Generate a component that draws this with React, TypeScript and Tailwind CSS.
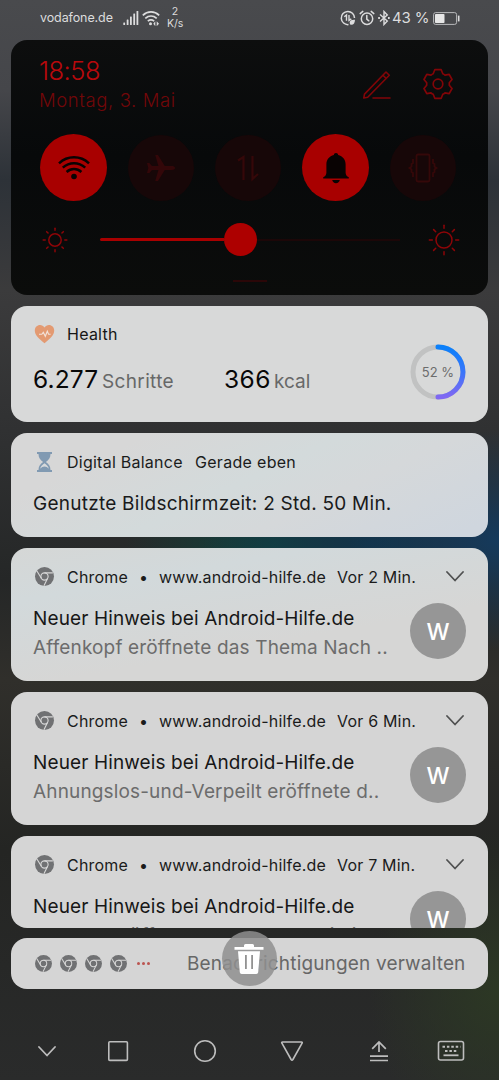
import type { ReactNode } from 'react'

type Notification = {
  time: string
  text: string
  clipped?: boolean
}

const notifications: Notification[] = [
  { time: 'Vor 2 Min.', text: 'Affenkopf eröffnete das Thema Nach ..' },
  { time: 'Vor 6 Min.', text: 'Ahnungslos-und-Verpeilt eröffnete d..' },
  { time: 'Vor 7 Min.', text: 'knuddel eröffnete das Thema bei dir ..', clipped: true },
]

function ChromeIcon({ className }: { className: string }) {
  return (
    <svg className={className} viewBox="0 0 20 20" fill="none">
      <circle cx="10" cy="10" r="10" fill="#707173" />
      <circle cx="10" cy="10" r="3.8" stroke="#d6d6d6" strokeWidth="1.2" />
      <path d="M10 6.2H18.8M6.7 11.9L2 4.2M13.3 11.9L9.4 19.8" stroke="#d6d6d6" strokeWidth="1.2" />
    </svg>
  )
}

function Sun({ className, r, inner, outer }: { className: string; r: number; inner: number; outer: number }) {
  return (
    <svg className={className} viewBox="-16 -16 32 32" fill="none" stroke="#8d0508" strokeWidth="1.5" strokeLinecap="round">
      <circle r={r} />
      {[0, 45, 90, 135, 180, 225, 270, 315].map((a) => (
        <path key={a} d={`M0 ${-inner}V${-outer}`} transform={`rotate(${a})`} />
      ))}
    </svg>
  )
}

function Tile({ on, children }: { on?: boolean; children: ReactNode }) {
  return (
    <div className={on ? 'size-[67px] rounded-full bg-[#a80000] flex items-center justify-center' : 'size-[66px] rounded-full bg-[#170708] flex items-center justify-center'}>
      {children}
    </div>
  )
}

function StatusBar() {
  return (
    <div className="h-[40px] shrink-0 flex items-center pl-[40px] pr-[38px] pb-[4px] text-[#dcdcdd]">
      <span className="text-[12.5px] tracking-[-0.1px] w-[83px] whitespace-nowrap">vodafone.de</span>
      <svg className="w-[16px] h-[16px]" viewBox="0 0 16 16" fill="currentColor">
        <rect x="0.3" y="12.5" width="1.8" height="2.5" rx=".5" />
        <rect x="3.7" y="9.5" width="1.8" height="5.5" rx=".5" />
        <rect x="7" y="6.5" width="1.8" height="8.5" rx=".5" />
        <rect x="10.3" y="3.5" width="1.8" height="11.5" rx=".5" />
        <rect x="13.5" y="1" width="1.8" height="14" rx=".5" />
      </svg>
      <svg className="w-[18px] h-[16px] ml-[3px]" viewBox="0 0 18 16" fill="none" stroke="currentColor" strokeWidth="1.7">
        <path d="M.8 5.3C5.5.8 12.5.8 17.2 5.3M3.3 8.4c3.4-3 8-3 11.4 0M5.8 11.2c2-1.6 4.4-1.6 6.4 0" />
        <circle cx="8.5" cy="13.8" r="1.5" fill="currentColor" stroke="none" />
        <path d="M13.3 11.2v5l-2-2.5zM14.7 11.2v5l2.3-2.5z" fill="currentColor" stroke="none" />
      </svg>
      <div className="ml-[7px] w-[16px] text-center text-[10.5px] leading-[12px]">
        <div>2</div>
        <div>K/s</div>
      </div>
      <div className="flex-1" />
      <svg className="w-[16px] h-[16px]" viewBox="0 0 16 16" fill="none" stroke="currentColor" strokeWidth="1.5">
        <path d="M14.5 8A6.6 6.6 0 1 0 8.5 14.6" />
        <path d="M4.3 6.7 6.5 5v5.7M9 5v5.5l2.3-1.6" strokeWidth="1.4" />
        <path d="M9.7 12.5c0-2.2 2.2-2.7 5.3-2.8-.1 3.1-1.2 5.1-3.7 5.1-1 0-1.6-.9-1.6-2.3z" fill="currentColor" stroke="none" />
      </svg>
      <svg className="w-[16px] h-[16px] ml-[3px]" viewBox="0 0 16 16" fill="none" stroke="currentColor" strokeWidth="1.5" strokeLinecap="round">
        <circle cx="8" cy="8.8" r="5.7" />
        <path d="M7.8 5.6v3.6l2 1.6M1.2 3.6l2.6-2.2M14.8 3.6l-2.6-2.2" />
      </svg>
      <svg className="w-[12px] h-[16px] ml-[3px]" viewBox="0 0 12 16" fill="none" stroke="currentColor" strokeWidth="1.4">
        <path d="M2 4.5l7.3 6.6L6 14.5v-13l3.3 3.4L2 11.5" />
        <path d="M.2 8h1.7M10 8h1.7" strokeWidth="1.8" />
      </svg>
      <span className="text-[15px] tracking-[-0.1px] ml-[2px] w-[41px] whitespace-nowrap">43 %</span>
      <svg className="w-[27px] h-[13px] mr-[1px]" viewBox="0 0 27 13" fill="none">
        <rect x=".6" y=".6" width="23" height="11.8" rx="2" stroke="#b9babc" strokeWidth="1" />
        <rect x="2" y="2" width="9.5" height="9" rx=".8" fill="#e6e6e6" />
        <path d="M25.7 3.6v5.8" stroke="#dcdcdd" strokeWidth="1.6" />
      </svg>
    </div>
  )
}

function QuickSettings() {
  return (
    <div className="h-[255px] shrink-0 rounded-[16px] bg-[linear-gradient(180deg,#0d0e0e_0%,#07090a_45%,#0b0c0b_100%)] flex flex-col">
      <div className="h-[94px] flex pl-[28px] pr-[35px] pt-[16px]">
        <div className="flex-1">
          <div className="text-[25.5px] leading-[30px] font-light tracking-[-0.5px] text-[#b8090c]">18:58</div>
          <div className="text-[18.5px] leading-[28px] font-light tracking-[0.6px] text-[#720709]">Montag, 3. Mai</div>
        </div>
        <svg className="w-[30px] h-[30px] mt-[14px]" viewBox="0 0 30 30" fill="none" stroke="#820508" strokeWidth="1.6" strokeLinejoin="round" strokeLinecap="round">
          <path d="M1.8 28l.7-3.900L24 2l3.300 3.200L5.700 27.200zM20.900 5.200l3.200 3.200M11 28h17" />
        </svg>
        <svg className="w-[30px] h-[32px] ml-[31px] mt-[12px]" viewBox="-15 -16 30 32" fill="none" stroke="#820508" strokeWidth="1.7" strokeLinejoin="round">
          <circle r="4.8" />
          <path d="M-3.2 -14.3H3.2L4.8 -10.3Q6 -9.8 7 -8.9L11.2 -9.6 14 -4.5 11.3 -1.3V1.3L14 4.5 11.2 9.6 7 8.9Q6 9.8 4.8 10.3L3.2 14.3H-3.2L-4.8 10.3Q-6 9.8 -7 8.9L-11.2 9.6 -14 4.5 -11.3 1.3V-1.3L-14 -4.5 -11.2 -9.6 -7 -8.9Q-6 -9.8 -4.8 -10.3Z" />
        </svg>
      </div>
      <div className="flex items-center justify-between pl-[29px] pr-[32px] h-[67px]">
        <Tile on>
          <svg className="w-[34px] h-[27px]" viewBox="0 0 34 27" fill="none" stroke="#090303" strokeWidth="2.5">
            <path d="M2 9.3C10.5 1.3 23.5 1.3 32 9.3M5.8 13.7c6.5-6 15.9-6 22.4 0M9.6 18c4.3-3.9 10.5-3.9 14.8 0" />
            <circle cx="17" cy="22.5" r="2.8" fill="#090303" stroke="none" />
          </svg>
        </Tile>
        <Tile>
          <svg className="w-[30px] h-[28px]" viewBox="0 0 30 28" fill="#330709">
            <path d="M29 14c0 1.4-1.6 1.9-3.3 1.9h-6.9L12 27H9.2l3.2-11.1H6L3.4 19H1l1.3-5L1 9h2.4L6 12.1h6.4L9.2 1H12l6.8 11.1h6.9c1.7 0 3.3.5 3.3 1.9z" />
          </svg>
        </Tile>
        <Tile>
          <svg className="w-[26px] h-[28px]" viewBox="0 0 26 28" fill="none" stroke="#350809" strokeWidth="2.2">
            <path d="M3 6.5l5.5-3.5v23M17.5 2v23l5.5-5" />
          </svg>
        </Tile>
        <Tile on>
          <svg className="w-[26px] h-[32px]" viewBox="0 0 26 32" fill="#090303">
            <path d="M13 1c1.3 0 2 .8 2.2 1.9 4.4 1.1 7.4 4.5 7.4 9.3v8.3c0 2.2 1.2 3.9 3.2 4.8v1.200H.2v-1.200c2-.9 3.200-2.600 3.200-4.800v-8.300c0-4.800 3-8.200 7.400-9.300C11 1.800 11.700 1 13 1zM9.200 28h7.600c-.4 2-1.900 3.200-3.800 3.200S9.600 30 9.200 28z" />
          </svg>
        </Tile>
        <Tile>
          <svg className="w-[32px] h-[30px]" viewBox="0 0 32 30" fill="none" stroke="#350809" strokeWidth="1.8">
            <rect x="9.5" y="1.5" width="13" height="27" rx="1.5" />
            <path d="M6 6v4l-1.5 1v2.5L2.500 15l2 1.500V19L6 20v4M26 6v4l1.500 1v2.500l2 1.500-2 1.500V19L26 20v4" />
          </svg>
        </Tile>
      </div>
      <div className="flex items-center h-[77px] pl-[28px] pr-[28px]">
        <Sun className="size-[32px]" r={6.2} inner={9.8} outer={11.8} />
        <div className="ml-[29px] w-[300px] flex items-center">
          <div className="w-[124px] h-[3px] rounded-l bg-[#a80000]" />
          <div className="size-[33px] rounded-full bg-[#ad0000]" />
          <div className="flex-1 h-[2px] bg-[#1c0708]" />
        </div>
        <Sun className="size-[32px] ml-auto" r={8} inner={11.7} outer={14.7} />
      </div>
      <div className="w-[34px] h-[2px] mx-auto mt-[2px] bg-[#2b0708]" />
    </div>
  )
}

function Chevron({ className }: { className: string }) {
  return (
    <svg className={className} viewBox="0 0 18 11" fill="none" stroke="currentColor" strokeWidth="1.8" strokeLinecap="round" strokeLinejoin="round">
      <path d="M1 1l8 8.5L17 1" />
    </svg>
  )
}

function HealthCard() {
  return (
    <div className="h-[116px] shrink-0 rounded-[16px] bg-[#d8d9d9] flex pl-[22px] pr-[22px]">
      <div className="flex-1 pt-[14px]">
        <div className="flex items-center h-[28px]">
          <svg className="w-[21px] h-[20px] ml-[1px]" viewBox="0 0 21 20">
            <path d="M10.5 19.2C4.5 14.5.8 11 .8 6.6.8 3.2 3.2 1 6 1c1.9 0 3.5.9 4.5 2.5C11.5 1.9 13.1 1 15 1c2.8 0 5.2 2.2 5.2 5.6 0 4.4-3.7 7.9-9.7 12.6z" fill="#e39a72" />
            <path d="M5 10.3h2.8l1.5-2 2 4 2-5 1.3 3h2" fill="none" stroke="#f3e3da" strokeWidth="1.1" />
          </svg>
          <span className="text-[16px] tracking-[0.25px] ml-[12px] text-[#161616]">Health</span>
        </div>
        <div className="flex items-baseline mt-[15px] leading-[32px] text-[#080808]">
          <span className="text-[24.5px] w-[69px] tracking-[0.15px]">6.277</span>
          <span className="text-[19px] tracking-[0.35px] w-[122px] text-[#676868]">Schritte</span>
          <span className="text-[24.5px] w-[50px] tracking-[0.4px]">366</span>
          <span className="text-[19px] text-[#676868]">kcal</span>
        </div>
      </div>
      <div className="grid place-items-center size-[56px] mt-[38px]">
        <svg className="size-[56px] col-start-1 row-start-1" viewBox="0 0 56 56" fill="none" strokeWidth="5">
          <defs>
            <linearGradient id="ring" x1="0" y1="0" x2="0" y2="1">
              <stop offset="0" stopColor="#0b80fa" />
              <stop offset=".5" stopColor="#3a76fa" />
              <stop offset="1" stopColor="#8068f2" />
            </linearGradient>
          </defs>
          <circle cx="28" cy="28" r="25" stroke="#c1c2c2" />
          <path d="M28 3A25 25 0 0 1 28 53" stroke="url(#ring)" strokeLinecap="round" />
        </svg>
        <span className="col-start-1 row-start-1 pt-[2px] text-[13px] text-[#6c6c6c] whitespace-nowrap">52 %</span>
      </div>
    </div>
  )
}

function BalanceCard() {
  return (
    <div className="h-[104px] shrink-0 rounded-[16px] bg-[linear-gradient(155deg,#d7d7d7_20%,#d3dadb_48%,#d5d8da_65%,#cfd6de_95%)] px-[22px] pt-[14.5px]">
      <div className="flex items-center h-[28px] text-[16px] text-[#1b1c1c]">
        <svg className="w-[21px] h-[20px] ml-[1px]" viewBox="0 0 21 20">
          <path d="M3 0h15v2H3zM3 18h15v2H3z" fill="#819ab2" />
          <path d="M4.500 2h12c0 4-2 6-4.600 8 2.600 2 4.600 4 4.600 8h-12c0-4 2-6 4.600-8C6.500 8 4.500 6 4.500 2z" fill="#819ab2" />
          <path d="M10.500 11.300c2.300 1.600 3.900 3 4.300 5.500-1.500-1.500-2.700-2.200-4.300-2.200s-2.800.7-4.300 2.200c.4-2.500 2-3.900 4.300-5.500z" fill="#d8dadb" />
        </svg>
        <span className="ml-[12px] w-[128px] tracking-[0.25px]">Digital Balance</span>
        <span className="tracking-[0.3px]">Gerade eben</span>
      </div>
      <div className="mt-[14px] text-[19px] leading-[28px] tracking-[0.25px] text-[#191a1b] whitespace-nowrap">Genutzte Bildschirmzeit: 2 Std. 50 Min.</div>
    </div>
  )
}

function ChromeCard({ item, first }: { item: Notification; first: boolean }) {
  return (
    <div className={`shrink-0 rounded-[16px] overflow-hidden px-[22px] pt-[15px] ${item.clipped ? 'h-[92px]' : 'h-[133px]'} ${first ? 'bg-[linear-gradient(170deg,#d5d7d6_0%,#d2d9db_25%,#d6d6d5_65%)]' : 'bg-[#d5d5d5]'}`}>
      <div className="flex items-center h-[28px] text-[16px] tracking-[0.2px] text-[#1b1b1b] whitespace-nowrap">
        <ChromeIcon className="w-[21px] h-[19px] -mt-[2px] ml-[1px]" />
        <span className="ml-[12px] w-[72px]">Chrome</span>
        <span className="w-[20px]">•</span>
        <span className="w-[178px]">www.android-hilfe.de</span>
        <span>{item.time}</span>
        <Chevron className="w-[18px] h-[11px] ml-auto -mt-[2px] mr-[2px] text-[#505151]" />
      </div>
      <div className="flex mt-[12px] whitespace-nowrap">
        <div className="flex-1 min-w-0">
          <div className="text-[19px] leading-[31px] tracking-[0.12px] text-[#171717]">Neuer Hinweis bei Android-Hilfe.de</div>
          <div className="text-[19px] leading-[28px] tracking-[0.15px] text-[#6c6c6c]">{item.text}</div>
        </div>
        <div className="size-[56px] rounded-full bg-[#969696] text-white text-[23px] font-medium flex items-center justify-center shrink-0 pt-[2px]">W</div>
      </div>
    </div>
  )
}

function ManageBar() {
  return (
    <div className="relative h-[51px] -mt-[1px] shrink-0 rounded-[16px] bg-[#d5d5d5] flex items-center px-[22.5px]">
      <div className="flex gap-[8px] ml-[1px]">
        {[0, 1, 2, 3].map((i) => <ChromeIcon key={i} className="size-[17px]" />)}
      </div>
      <div className="flex gap-[2px] ml-[10px]">
        <i className="size-[3px] rounded-full bg-[#bb5450]" />
        <i className="size-[3px] rounded-full bg-[#bb5450]" />
        <i className="size-[3px] rounded-full bg-[#bb5450]" />
      </div>
      <span className="ml-auto text-[19px] tracking-[0.16px] pt-[2px] text-[#676767] whitespace-nowrap">Benachrichtigungen verwalten</span>
      {/* clear-all button floats over the bar */}
      <div className="absolute left-[211px] top-[-7px] size-[55px] rounded-full bg-[#8f8f8f]/85 flex items-center justify-center">
        <svg className="w-[30px] h-[32px] -ml-[1px]" viewBox="0 0 30 32">
          <path d="M.5 4H10V2.500Q10 1 11.500 1h7Q20 1 20 2.500V4h9.500v2.800H.5zM4 8.300h22l-1.800 21Q24 31 22.300 31H7.700Q6 31 5.800 29.300z" fill="#fff" />
          <path d="M11.900 12V26M18.100 12V26" stroke="#929292" strokeWidth="1.8" />
        </svg>
      </div>
    </div>
  )
}

function NavBar() {
  return (
    <div className="flex-1 flex items-center pt-[33px] pl-[38px] pr-[34px] text-[#bdbdbd]">
      <Chevron className="w-[18px] h-[11px]" />
      <svg className="w-[22px] h-[22px] ml-[51px]" viewBox="0 0 22 22" fill="none" stroke="currentColor" strokeWidth="1.6">
        <rect x="1.8" y="1.8" width="18.6" height="18.6" rx="1" />
      </svg>
      <svg className="w-[24px] h-[24px] ml-[64px]" viewBox="0 0 24 24" fill="none" stroke="currentColor" strokeWidth="1.6">
        <circle cx="12" cy="12" r="10.3" />
      </svg>
      <svg className="w-[24px] h-[22px] ml-[63px]" viewBox="0 0 24 22" fill="none" stroke="currentColor" strokeWidth="1.6" strokeLinejoin="round">
        <path d="M2.500 2h19q1.200 0 .6 1.100L12.900 19.500q-.9 1.300-1.800 0L1.900 3.100Q1.300 2 2.500 2z" />
      </svg>
      <svg className="w-[20px] h-[22px] ml-[65px]" viewBox="0 0 20 22" fill="none" stroke="currentColor" strokeWidth="1.7">
        <path d="M10 12V2M3.200 8.800L10 2l6.800 6.800M1 16.200h18M1 20.500h18" />
      </svg>
      <svg className="w-[28px] h-[22px] ml-auto" viewBox="0 0 28 22" fill="none" stroke="currentColor" strokeWidth="1.6">
        <rect x="1.5" y="1.5" width="25" height="18.5" rx="2" />
        <path d="M5.500 6.800h18M8 11h13" strokeDasharray="2.5 1.9" strokeWidth="2" />
        <path d="M6.500 15.300h15" strokeWidth="1.8" />
      </svg>
    </div>
  )
}

export default function App() {
  return (
    <div className="w-[499px] h-[1080px] overflow-hidden flex flex-col font-['Inter',sans-serif] bg-[radial-gradient(ellipse_150px_110px_at_499px_540px,#153a5c,transparent),radial-gradient(ellipse_170px_60px_at_370px_543px,#12344b,transparent),radial-gradient(ellipse_150px_70px_at_275px_545px,#10433d,transparent),radial-gradient(ellipse_130px_160px_at_499px_990px,#2c3824,transparent),linear-gradient(180deg,#494a4d_0px,#45464a_90px,#2d3238_180px,#3b3b3c_290px,#303132_430px,#252727_580px,#302f2b_680px,#242523_850px,#2a2b2b_1080px)]">
      <StatusBar />
      <div className="flex flex-col gap-[11px] px-[11px]">
        <QuickSettings />
        <HealthCard />
        <BalanceCard />
        {notifications.map((item, i) => (
          <ChromeCard key={item.time} item={item} first={i === 0} />
        ))}
        <ManageBar />
      </div>
      <NavBar />
    </div>
  )
}
